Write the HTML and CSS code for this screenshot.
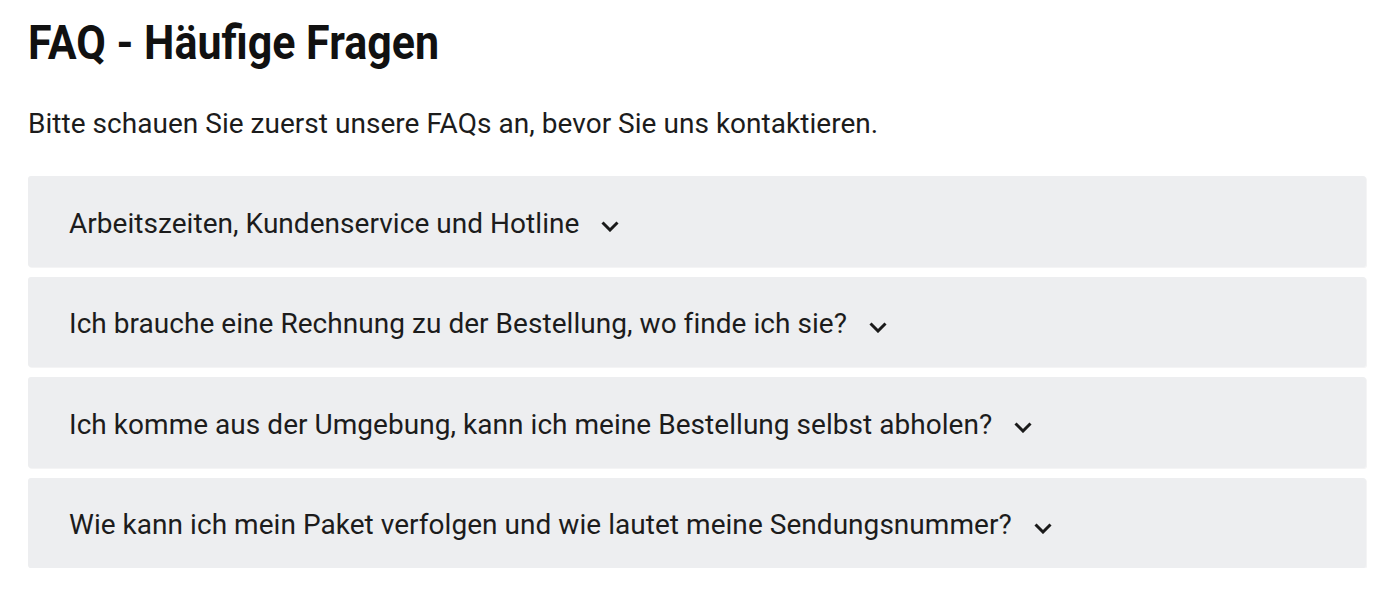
FILE: index.html
```html
<!DOCTYPE html>
<html lang="de">
<head>
<meta charset="utf-8">
<title>FAQ</title>
<link rel="stylesheet" href="styles.css">
</head>
<body>
<main class="page">
  <h1 class="title"><span class="title-text">FAQ - Häufige Fragen</span></h1>
  <p class="intro">Bitte schauen Sie zuerst unsere FAQs an, bevor Sie uns kontaktieren.</p>
  <div class="faq">
    <div class="faq-item">
      <span class="q">Arbeitszeiten, Kundenservice und Hotline</span>
      <svg class="chev" viewBox="0 0 18 11" width="18" height="11"><polyline points="1.5,1.5 9,9 16.5,1.5"/></svg>
    </div>
    <div class="faq-item">
      <span class="q">Ich brauche eine Rechnung zu der Bestellung, wo finde ich sie?</span>
      <svg class="chev" viewBox="0 0 18 11" width="18" height="11"><polyline points="1.5,1.5 9,9 16.5,1.5"/></svg>
    </div>
    <div class="faq-item">
      <span class="q">Ich komme aus der Umgebung, kann ich meine Bestellung selbst abholen?</span>
      <svg class="chev" viewBox="0 0 18 11" width="18" height="11"><polyline points="1.5,1.5 9,9 16.5,1.5"/></svg>
    </div>
    <div class="faq-item">
      <span class="q">Wie kann ich mein Paket verfolgen und wie lautet meine Sendungsnummer?</span>
      <svg class="chev" viewBox="0 0 18 11" width="18" height="11"><polyline points="1.5,1.5 9,9 16.5,1.5"/></svg>
    </div>
  </div>
</main>
</body>
</html>
```
FILE: styles.css
```css
html, body {
  margin: 0;
  padding: 0;
  background: #ffffff;
}
body {
  font-family: Roboto, "Noto Sans", sans-serif;
  color: #1c1c1c;
}
.page {
  padding: 15px 30px 0 28px;
}
.title {
  margin: 0;
  font-size: 48px;
  font-weight: 700;
  line-height: 56px;
  color: #111;
  white-space: nowrap;
}
.title-text {
  display: inline-block;
  transform: scaleX(0.895);
  transform-origin: left center;
}
.intro {
  margin: 37px 0 0 0;
  font-size: 28px;
  line-height: 32px;
  letter-spacing: 0.03px;
  color: #1c1c1c;
}
.faq {
  margin-top: 36px;
  display: flex;
  flex-direction: column;
  gap: 10px;
}
.faq-item {
  background: #edeef0;
  border-radius: 3px;
  box-shadow: 1px 1px 0 #f4f4f5;
  height: 90.5px;
  box-sizing: border-box;
  padding: 5px 41px 0;
  display: flex;
  align-items: center;
  gap: 22px;
}
.q {
  font-size: 28px;
  line-height: 32px;
  letter-spacing: 0.04px;
  color: #1c1c1c;
}
.chev {
  flex: none;
  fill: none;
  stroke: #1a1a1a;
  stroke-width: 3;
  margin-top: 6px;
}
```
